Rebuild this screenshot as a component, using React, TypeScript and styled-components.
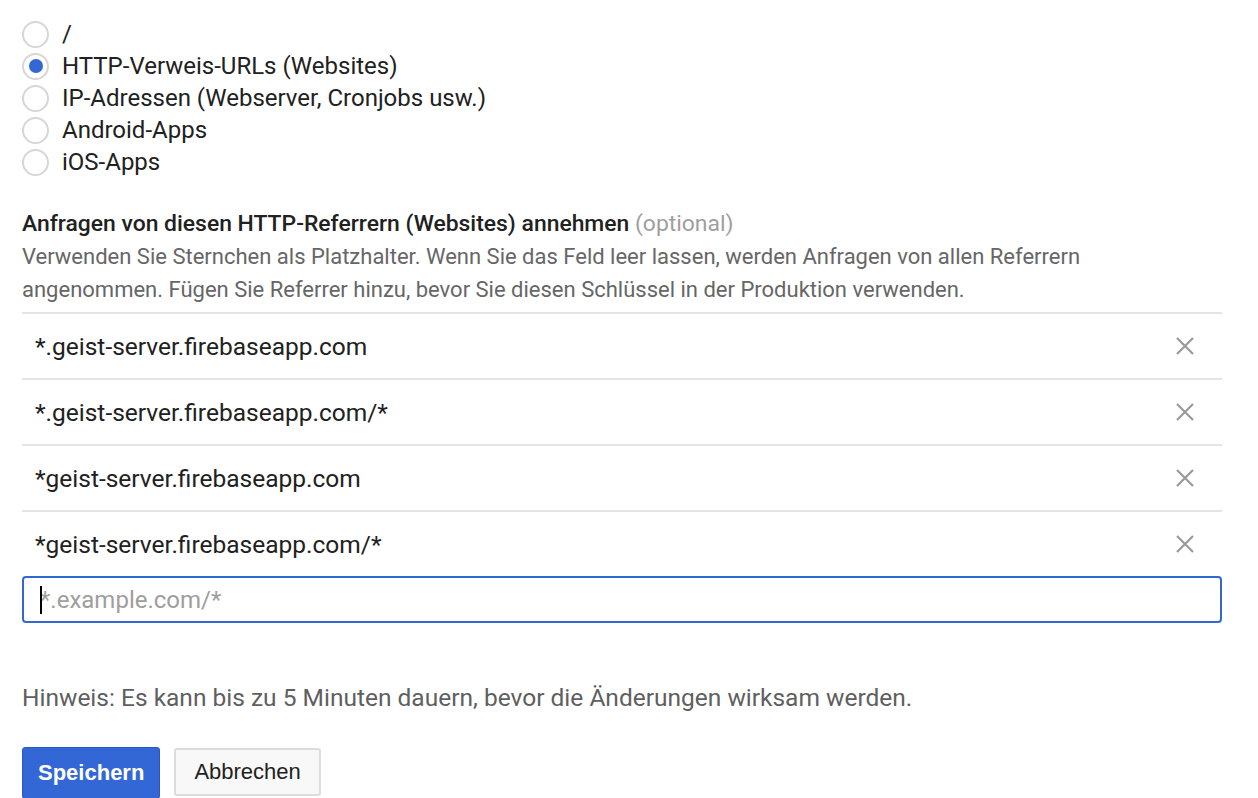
import React, { useState } from 'react';
import styled, { createGlobalStyle } from 'styled-components';

const GlobalStyle = createGlobalStyle`
	html, body {
		margin: 0;
		padding: 0;
		background: #fff;
	}
	body {
		font-family: Roboto, 'Liberation Sans', Arial, sans-serif;
		color: #212121;
	}
`;

const restrictionOptions = [
	{ id: 'none', label: '/' },
	{ id: 'http', label: 'HTTP-Verweis-URLs (Websites)' },
	{ id: 'ip', label: 'IP-Adressen (Webserver, Cronjobs usw.)' },
	{ id: 'android', label: 'Android-Apps' },
	{ id: 'ios', label: 'iOS-Apps' },
];

const initialReferrers = [
	'*.geist-server.firebaseapp.com',
	'*.geist-server.firebaseapp.com/*',
	'*geist-server.firebaseapp.com',
	'*geist-server.firebaseapp.com/*',
];

export default function App() {
	const [selected, setSelected] = useState('http');
	const [referrers, setReferrers] = useState(initialReferrers);
	const [draft, setDraft] = useState('');

	const removeReferrer = (index: number) =>
		setReferrers((list) => list.filter((_, i) => i !== index));

	return (
		<Page>
			<GlobalStyle />

			<RadioGroup>
				{restrictionOptions.map((option) => (
					<RadioRow key={option.id} onClick={() => setSelected(option.id)}>
						<RadioCircle checked={selected === option.id} />
						<RadioLabel>{option.label}</RadioLabel>
					</RadioRow>
				))}
			</RadioGroup>

			<Section>
				<Heading>
					Anfragen von diesen HTTP-Referrern (Websites) annehmen <Optional>(optional)</Optional>
				</Heading>
				<Description>
					Verwenden Sie Sternchen als Platzhalter. Wenn Sie das Feld leer lassen, werden Anfragen von allen Referrern
					<br />
					angenommen. Fügen Sie Referrer hinzu, bevor Sie diesen Schlüssel in der Produktion verwenden.
				</Description>

				<ReferrerList>
					{referrers.map((referrer, index) => (
						<ReferrerRow key={referrer}>
							<ReferrerText>{referrer}</ReferrerText>
							<RemoveButton aria-label='Entfernen' onClick={() => removeReferrer(index)}>
								<svg width='18' height='18' viewBox='0 0 18 18'>
									<path d='M1 1L17 17M17 1L1 17' stroke='#9a9a9a' strokeWidth='2.2' fill='none' />
								</svg>
							</RemoveButton>
						</ReferrerRow>
					))}
				</ReferrerList>

				<InputBox>
					<Caret />
					<ReferrerInput
						placeholder='*.example.com/*'
						value={draft}
						onChange={(e) => setDraft(e.target.value)}
					/>
				</InputBox>
			</Section>

			<Hint>Hinweis: Es kann bis zu 5 Minuten dauern, bevor die Änderungen wirksam werden.</Hint>

			<Actions>
				<Button $primary>Speichern</Button>
				<Button>Abbrechen</Button>
			</Actions>
		</Page>
	);
}

const Page = styled.div`
	width: 1200px;
	padding: 18px 0 0 22px;
`;

const RadioGroup = styled.div`
	display: flex;
	flex-direction: column;
`;

const RadioRow = styled.label`
	display: flex;
	align-items: center;
	gap: 13px;
	height: 32px;
	cursor: pointer;
`;

interface CheckedProps {
	checked: boolean;
}

const RadioCircle = styled.span<CheckedProps>`
	box-sizing: border-box;
	width: 27px;
	height: 27px;
	border-radius: 50%;
	border: 2px solid #d6d6d6;
	background: #fff;
	display: flex;
	align-items: center;
	justify-content: center;

	&::after {
		content: '';
		width: 14px;
		height: 14px;
		border-radius: 50%;
		background: #3367d6;
		display: ${(p) => (p.checked ? 'block' : 'none')};
	}
`;

const RadioLabel = styled.span`
	font-size: 24px;
	line-height: 32px;
	color: #212121;
`;

const Section = styled.div`
	margin-top: 30px;
`;

const Heading = styled.div`
	font-size: 22.9px;
	line-height: 32px;
	font-weight: 500;
	color: #212121;
`;

const Optional = styled.span`
	font-weight: 400;
	color: #9e9e9e;
`;

const Description = styled.p`
	margin: 0;
	font-size: 22px;
	line-height: 33px;
	color: #666;
`;

const ReferrerList = styled.div`
	margin-top: 6px;
	border-top: 2px solid #e5e5e5;
`;

const ReferrerRow = styled.div`
	display: flex;
	align-items: center;
	justify-content: space-between;
	height: 64px;
	padding: 0 28px 0 13px;
	border-bottom: 2px solid #e5e5e5;

	&:last-child {
		border-bottom: none;
		height: 64px;
	}
`;

const ReferrerText = styled.span`
	font-size: 24.5px;
	color: #212121;
`;

const RemoveButton = styled.button`
	border: none;
	background: none;
	padding: 0;
	display: flex;
	cursor: pointer;
`;

const InputBox = styled.div`
	position: relative;
`;

const Caret = styled.span`
	position: absolute;
	left: 18px;
	top: 10px;
	width: 2px;
	height: 28px;
	background: #000;
	pointer-events: none;
`;

const ReferrerInput = styled.input`
	box-sizing: border-box;
	display: block;
	width: 1200px;
	height: 47px;
	padding: 0 16px;
	border: 2px solid #3367d6;
	border-radius: 4px;
	font-family: Roboto, 'Liberation Sans', Arial, sans-serif;
	font-size: 24px;
	color: #212121;
	outline: none;

	&::placeholder {
		color: #9e9e9e;
	}
`;

const Hint = styled.p`
	margin: 59px 0 0;
	font-size: 24.5px;
	line-height: 32px;
	color: #5f5f5f;
`;

const Actions = styled.div`
	display: flex;
	align-items: flex-start;
	gap: 14px;
	margin-top: 33px;
`;

interface ButtonProps {
	$primary?: boolean;
}

const Button = styled.button<ButtonProps>`
	box-sizing: border-box;
	font-family: 'Liberation Sans', Arial, sans-serif;
	font-size: 22px;
	border-radius: 3px;
	cursor: pointer;
	padding: 0 ${(p) => (p.$primary ? '15px' : '18px')};
	height: ${(p) => (p.$primary ? '52px' : '48px')};
	margin-top: ${(p) => (p.$primary ? '0' : '1px')};
	font-weight: ${(p) => (p.$primary ? 700 : 400)};
	color: ${(p) => (p.$primary ? '#fff' : '#212121')};
	background: ${(p) => (p.$primary ? '#3367d6' : '#f8f8f8')};
	border: ${(p) => (p.$primary ? '1px solid #2a56c6' : '2px solid #dcdcdc')};
`;
